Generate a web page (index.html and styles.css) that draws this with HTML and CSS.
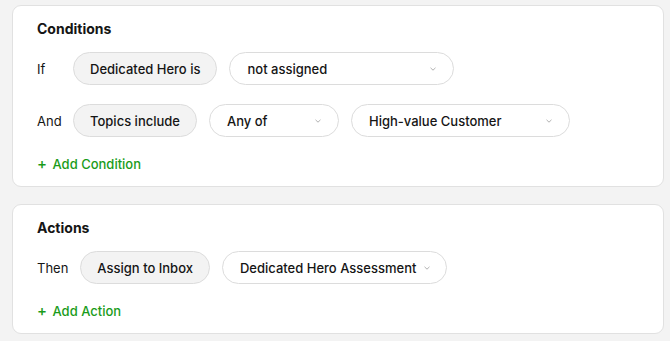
FILE: index.html
```html
<!DOCTYPE html>
<html lang="en">
<head>
  <meta charset="UTF-8" />
  <meta name="viewport" content="width=device-width, initial-scale=1.0" />
  <title>Rule Builder</title>
  <link rel="stylesheet" href="styles.css">
</head>
<body>
  <div class="page">
    <section class="card">
      <h2 class="card-title">Conditions</h2>
      <div class="rows">
        <div class="rule-row">
          <span class="row-label fixed">If</span>
          <span class="pill">Dedicated Hero is</span>
          <div class="select w-225">
            <span>not assigned</span>
            <svg class="chev" viewBox="0 0 6 4"><path d="M0.5 0.8 L3 3.2 L5.5 0.8" /></svg>
          </div>
        </div>
        <div class="rule-row">
          <span class="row-label fixed">And</span>
          <span class="pill">Topics include</span>
          <div class="select w-130">
            <span>Any of</span>
            <svg class="chev" viewBox="0 0 6 4"><path d="M0.5 0.8 L3 3.2 L5.5 0.8" /></svg>
          </div>
          <div class="select w-219">
            <span>High-value Customer</span>
            <svg class="chev" viewBox="0 0 6 4"><path d="M0.5 0.8 L3 3.2 L5.5 0.8" /></svg>
          </div>
        </div>
      </div>
      <a class="add-link" href="#"><span class="plus">+</span> Add Condition</a>
    </section>

    <section class="card">
      <h2 class="card-title">Actions</h2>
      <div class="rows">
        <div class="rule-row">
          <span class="row-label">Then</span>
          <span class="pill">Assign to Inbox</span>
          <div class="select w-225">
            <span>Dedicated Hero Assessment</span>
            <svg class="chev" viewBox="0 0 6 4"><path d="M0.5 0.8 L3 3.2 L5.5 0.8" /></svg>
          </div>
        </div>
      </div>
      <a class="add-link" href="#"><span class="plus">+</span> Add Action</a>
    </section>
  </div>
</body>
</html>
```

FILE: styles.css
```css
:root {
  --bg: #f3f3f3;
  --card-border: #e1e1e1;
  --pill-bg: #f3f3f3;
  --pill-border: #dcdcdc;
  --text: #151515;
  --green: #1a9c1a;
  --font: 'Inter', 'Liberation Sans', sans-serif;
}
* { box-sizing: border-box; margin: 0; padding: 0; }
body {
  background: var(--bg);
  font-family: var(--font);
  color: var(--text);
  font-size: 13px;
}
.page {
  display: flex;
  flex-direction: column;
  gap: 17px;
  padding: 5px 6px 0 12px;
}
.card {
  background: #fff;
  border: 1px solid var(--card-border);
  border-radius: 9px;
  padding: 13px 24px 12px;
}
.card-title {
  font-size: 14px;
  font-weight: 700;
  line-height: 20px;
  margin-bottom: 13px;
}
.rows {
  display: flex;
  flex-direction: column;
  gap: 19px;
}
.rule-row {
  display: flex;
  align-items: center;
  gap: 12px;
}
.row-label {
  flex: 0 0 auto;
  line-height: 20px;
  font-weight: 400;
}
.row-label.fixed {
  width: 24px;
  white-space: nowrap;
}
.pill,
.select {
  height: 33px;
  border-radius: 17px;
  font-weight: 500;
  display: flex;
  align-items: center;
  white-space: nowrap;
}
.pill {
  background: var(--pill-bg);
  border: 1px solid var(--pill-border);
  padding: 0 16px;
}
.select {
  background: #fff;
  border: 1px solid var(--pill-border);
  padding: 0 17px;
  justify-content: space-between;
  gap: 8px;
}
.w-225 { width: 225px; }
.w-130 { width: 130px; }
.w-219 { width: 219px; }
.chev {
  width: 6px;
  height: 4px;
  flex: 0 0 auto;
}
.chev path {
  fill: none;
  stroke: #a8a8a8;
  stroke-width: 0.9;
}
.add-link {
  display: inline-block;
  margin-top: 17px;
  line-height: 20px;
  color: var(--green);
  font-weight: 500;
  text-decoration: none;
}
.plus {
  font-size: 15px;
  margin-right: 2px;
}
```
